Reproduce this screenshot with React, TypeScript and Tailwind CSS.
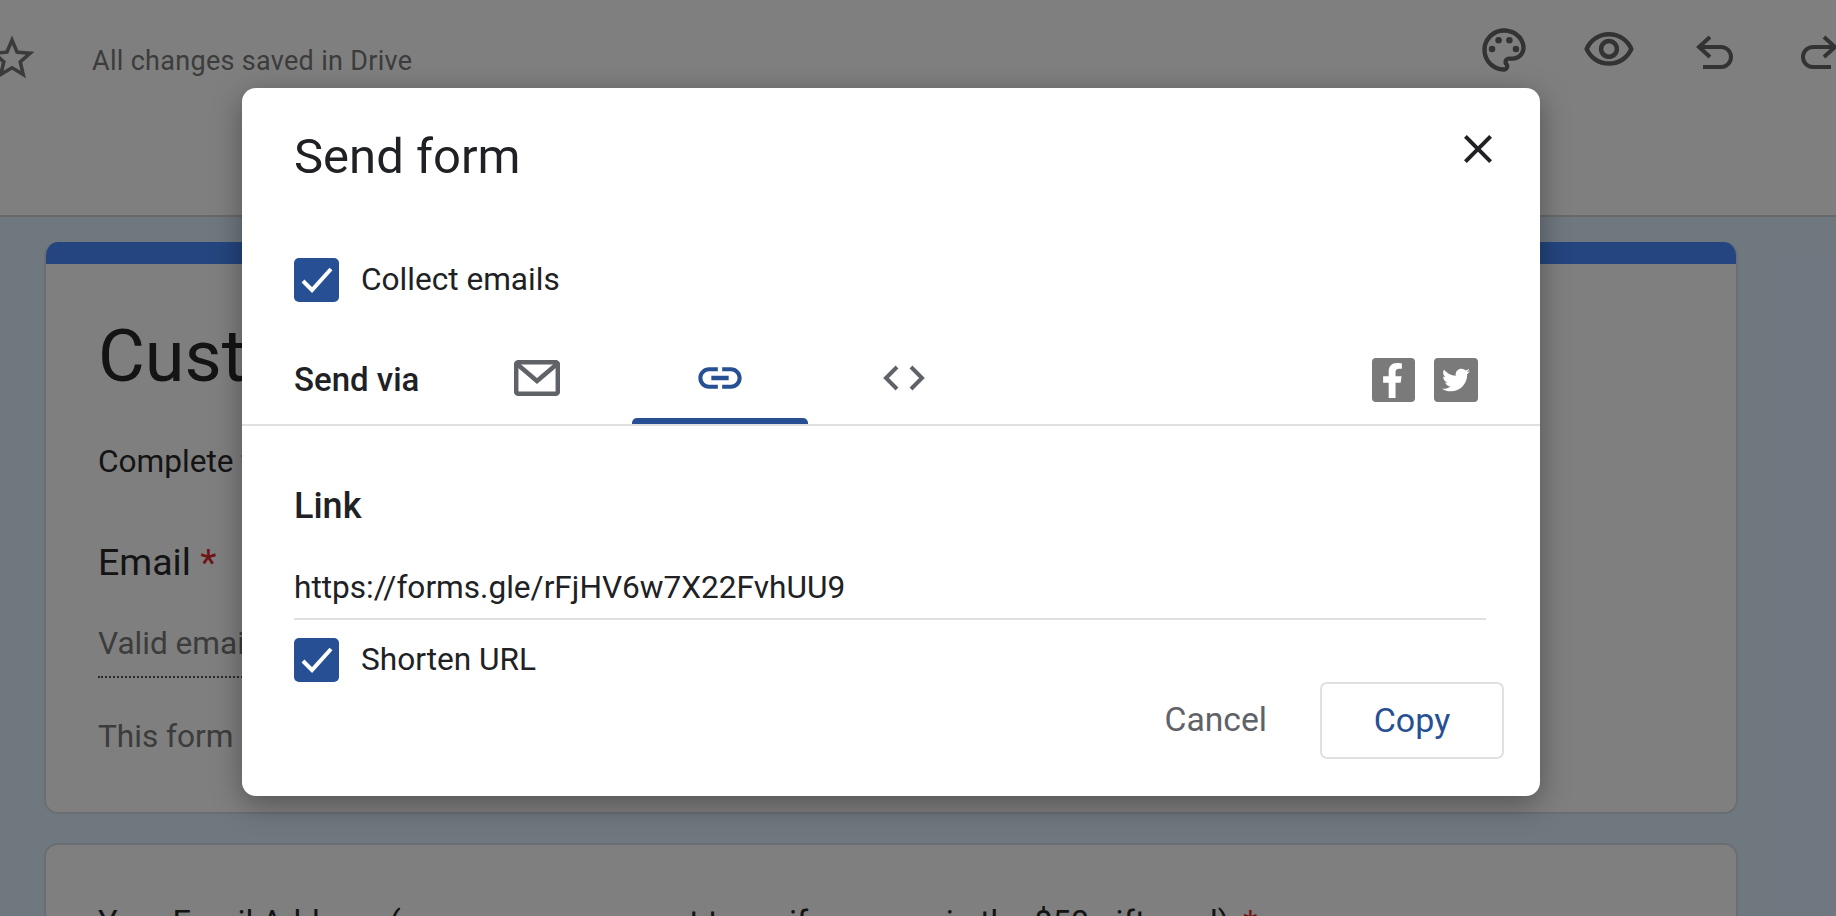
import React from 'react';
import { FaFacebookF, FaTwitter } from 'react-icons/fa';
import { MdClose, MdLink, MdOutlinePalette, MdOutlineVisibility, MdStarBorder } from 'react-icons/md';

const Checkbox: React.FC<{ label: string }> = ({ label }) => (
    <div className="flex items-center gap-[22px]">
        <div className="flex h-[44px] w-[45px] items-center justify-center rounded-[5px] bg-[#274f93]">
            <svg width="32" height="26" viewBox="0 0 32 26" fill="none">
                <path d="M2 14l9 9L30 2" stroke="white" strokeWidth="4" />
            </svg>
        </div>
        <span className="text-[31.6px] leading-[44px] text-[#202124]">{label}</span>
    </div>
);

const UndoIcon: React.FC<{ flip?: boolean }> = ({ flip }) => (
    <svg width="38" height="34" viewBox="0 0 38 34" fill="none" stroke="#666" strokeWidth="4" className={flip ? '-scale-x-100' : ''}>
        <path d="M14 2L3 12l11 10" />
        <path d="M3 12h22a10 10 0 0 1 0 20H7" />
    </svg>
);

const App: React.FC = () => {
    return (
        <div className="relative h-[916px] w-[1836px] overflow-hidden bg-[#dfeeff] font-['Roboto',sans-serif]">
            {/* page behind the dialog */}
            <header className="flex h-[217px] items-start border-b-2 border-[#d0d0d0] bg-white">
                <MdStarBorder size={54} color="#777" className="ml-[-15px] mt-[31px]" />
                <span className="ml-[53px] mt-[43px] text-[27px] leading-9 tracking-[0.3px] text-[#787878]">All changes saved in Drive</span>
                <div className="ml-auto mr-[-2px] mt-[23px] flex items-center">
                    <MdOutlinePalette size={52} color="#666" />
                    <MdOutlineVisibility size={54} color="#666" className="ml-[52px]" />
                    <div className="ml-[60px] mt-[4px]"><UndoIcon /></div>
                    <div className="ml-[66px] mt-[4px]"><UndoIcon flip /></div>
                </div>
            </header>
            <main className="flex flex-col gap-[29px] pl-[44px] pr-[98px] pt-[25px]">
                <section className="h-[572px] shrink-0 overflow-hidden rounded-[14px] border-x-2 border-b-2 border-[#d4dde6] bg-white">
                    <div className="-mx-[2px] h-[22px] bg-[#488aff]" />
                    <div className="px-[52px]">
                        <h1 className="mt-[51px] text-[72px] leading-[84px] text-[#282828]">Customer Survey</h1>
                        <p className="mt-[45px] text-[31.6px] leading-9 text-[#282828]">Complete this form</p>
                        <p className="mt-[58px] text-[37.5px] leading-[48px] text-[#282828]">Email <span className="text-[#e02a2a]">*</span></p>
                        <p className="mt-[40px] w-[600px] text-[31.6px] leading-9 text-[#787878]">Valid email address</p>
                        <div className="mt-[14px] w-[600px] border-b-2 border-dotted border-[#555]" />
                        <p className="mt-[41px] text-[31.6px] leading-9 text-[#787878]">This form is collecting emails</p>
                    </div>
                </section>
                <section className="h-[200px] shrink-0 rounded-[14px] border-2 border-[#d4dde6] bg-white px-[52px] pt-[60px]">
                    <p className="whitespace-nowrap text-[32.7px] leading-9 text-[#282828]">Your Email Address (we use your account to verify you are in the $50 gift card) <span className="ml-[6px] text-[#e02a2a]">*</span></p>
                </section>
            </main>

            <div className="absolute inset-0 bg-black/50" />

            {/* Send form dialog */}
            <div className="absolute left-[242px] top-[88px] flex h-[708px] w-[1298px] flex-col rounded-[14px] bg-white shadow-[0_8px_30px_rgba(0,0,0,0.35)]">
                <div className="flex items-center justify-between pl-[52px] pr-[38px] pt-[40px]">
                    <h2 className="text-[49px] leading-[58px] text-[#202124]">Send form</h2>
                    <MdClose size={48} color="#202124" className="-mt-[16px]" />
                </div>
                <div className="mt-[72px] pl-[52px]">
                    <Checkbox label="Collect emails" />
                </div>
                <div className="mt-[38px] flex h-[86px] border-b-2 border-[#e0e0e0] pl-[52px] pr-[62px]">
                    <div className="w-[162px] pt-[21px] text-[33px] font-medium leading-[38px] text-[#202124]">Send via</div>
                    <div className="flex w-[176px] items-start pl-[58px] pt-[20px]">
                        <svg width="46" height="36" viewBox="0 0 46 36" fill="none" stroke="#5f6368" strokeWidth="4.5">
                            <rect x="2.2" y="2.2" width="41.6" height="31.6" rx="2" />
                            <path d="M3 4l20 17L43 4" />
                        </svg>
                    </div>
                    <div className="relative flex w-[176px] justify-center pt-[12px]">
                        <MdLink size={52} color="#274f93" />
                        <div className="absolute bottom-0 left-0 h-[6px] w-full rounded-t-[5px] bg-[#274f93]" />
                    </div>
                    <div className="flex items-start pl-[75px] pt-[25px]">
                        <svg width="42" height="26" viewBox="0 0 42 26" fill="none" stroke="#5f6368" strokeWidth="4">
                            <path d="M14 2L3 13l11 11" />
                            <path d="M28 2l11 11-11 11" />
                        </svg>
                    </div>
                    <div className="ml-auto flex gap-[19px] pt-[18px]">
                        <div className="flex h-[44px] w-[43px] items-end justify-end overflow-hidden rounded-[4px] bg-[#7a7a7a] pb-[4px] pr-[5px]">
                            <FaFacebookF size={35} color="white" />
                        </div>
                        <div className="flex h-[44px] w-[44px] items-center justify-center rounded-[4px] bg-[#7a7a7a]">
                            <FaTwitter size={28} color="white" />
                        </div>
                    </div>
                </div>
                <div className="px-[52px]">
                    <h3 className="mt-[62px] text-[36px] font-medium leading-[36px] text-[#202124]">Link</h3>
                    <div className="mt-[45px] w-[1192px] border-b-2 border-[#e0e0e0] pb-[11px] text-[31.6px] leading-[38px] text-[#202124]">
                        https://forms.gle/rFjHV6w7X22FvhUU9
                    </div>
                    <div className="mt-[18px]">
                        <Checkbox label="Shorten URL" />
                    </div>
                </div>
                <div className="flex items-center justify-end pr-[36px]">
                    <span className="mr-[53px] text-[33.7px] text-[#5f6368]">Cancel</span>
                    <button className="h-[77px] w-[184px] rounded-[7px] border-2 border-[#e0e0e0] text-[34px] text-[#274f93]">Copy</button>
                </div>
            </div>
        </div>
    );
};

export default App;
